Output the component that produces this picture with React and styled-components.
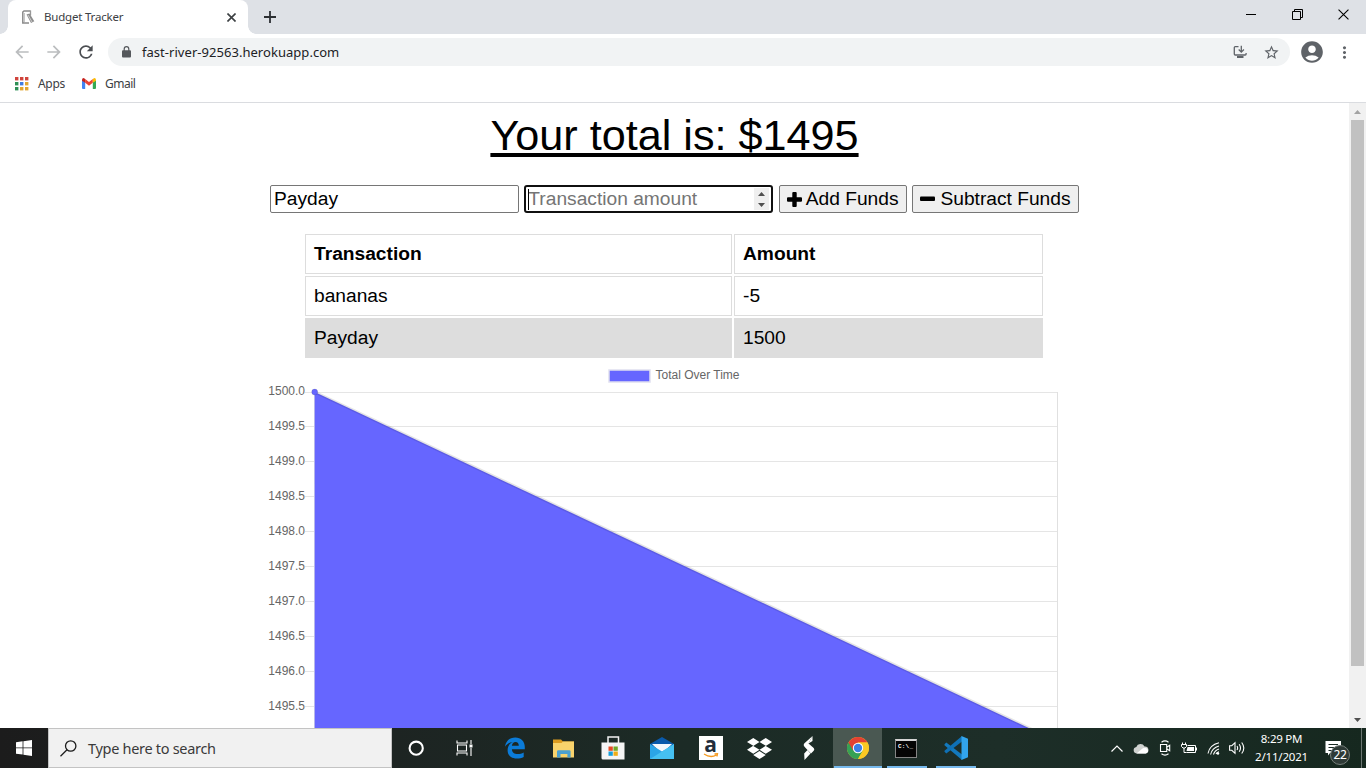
import React from 'react';
import styled, { createGlobalStyle } from 'styled-components';
import { FaDropbox } from 'react-icons/fa';
import {
  MdArrowBack, MdArrowForward, MdRefresh, MdStarBorder,
  MdAccountCircle, MdMoreVert,
} from 'react-icons/md';

const Global = createGlobalStyle`
  * { box-sizing: border-box; }
  body { margin: 0; background: #fff; overflow: hidden; }
`;

const ui = `"Noto Sans", "Open Sans", sans-serif`;
const arial = `"Liberation Sans", Arial, sans-serif`;

const Screen = styled.div`
  width: 1366px;
  height: 768px;
  display: flex;
  flex-direction: column;
  overflow: hidden;
  font-family: ${ui};
`;

const Label = styled.span`
  font-size: ${(p) => p.$size || 12}px;
  letter-spacing: ${(p) => p.$track || 0}px;
  color: ${(p) => p.$color || '#3c4043'};
  white-space: nowrap;
  line-height: 16px;
`;

/* Browser chrome */
const TabStrip = styled.div`
  height: 34px;
  flex: none;
  display: flex;
  background: #dee1e6;
  padding-left: 8px;
`;
const Tab = styled.div`
  position: relative;
  width: 240px;
  height: 34px;
  display: flex;
  align-items: center;
  padding: 0 12px 0 12px;
  background: #fff;
  border-radius: 8px 8px 0 0;
  &::before, &::after {
    content: '';
    position: absolute;
    bottom: 0;
    width: 8px;
    height: 8px;
  }
  &::before { left: -8px; background: radial-gradient(circle at 0 0, #dee1e6 7.5px, #fff 8px); }
  &::after { right: -8px; background: radial-gradient(circle at 100% 0, #dee1e6 7.5px, #fff 8px); }
`;
const TabTitle = styled.div`
  flex: 1;
  display: flex;
  margin-left: 8px;
`;
const NewTab = styled.div`
  width: 44px;
  display: flex;
  align-items: center;
  justify-content: center;
`;
const WindowButtons = styled.div`
  display: flex;
  margin-left: auto;
  height: 29px;
`;
const WindowButton = styled.div`
  width: 46px;
  display: flex;
  align-items: center;
  justify-content: center;
`;
const Toolbar = styled.div`
  height: 36px;
  flex: none;
  display: flex;
  align-items: center;
  padding-left: 12px;
  color: #5f6368;
`;
const NavButton = styled.div`
  width: 32px;
  height: 20px;
  display: flex;
  color: ${(p) => (p.$off ? '#bbbdbf' : '#4b4e52')};
`;
const Omnibox = styled.div`
  width: 1182px;
  height: 28px;
  border-radius: 14px;
  background: #f1f3f4;
  display: flex;
  align-items: center;
  padding: 0 10px 0 14px;
`;
const Url = styled.div`
  flex: 1;
  display: flex;
  margin-left: 11px;
`;
const OmniActions = styled.div`
  display: flex;
  align-items: center;
  gap: 16px;
`;
const Account = styled.div`
  display: flex;
  margin: 0 10px 0 9px;
`;
const Bookmarks = styled.div`
  height: 33px;
  flex: none;
  display: flex;
  align-items: center;
  padding: 0 0 5px 15px;
  border-bottom: 1px solid #dadce0;
`;
const Bookmark = styled.div`
  display: flex;
  align-items: center;
  gap: 9px;
  width: ${(p) => p.$w}px;
`;

/* Page */
const Viewport = styled.div`
  height: 625px;
  flex: none;
  display: flex;
`;
const Page = styled.main`
  width: 1349px;
  height: 625px;
  overflow: hidden;
  display: flex;
  flex-direction: column;
  align-items: center;
  font-family: ${arial};
  font-size: 19.2px;
  line-height: 22px;
  color: #000;
`;
const Total = styled.h1`
  margin: 8px 0 0;
  height: 74px;
  font-size: 43.2px;
  line-height: 48px;
  font-weight: 400;
  text-decoration: underline;
  text-decoration-thickness: 4px;
  text-underline-offset: 3px;
`;
const Form = styled.div`
  display: flex;
  gap: 5.33px;
  height: 28px;
  margin-bottom: 21px;
`;
const Field = styled.div`
  position: relative;
  width: 249px;
  height: 28px;
  display: flex;
  align-items: center;
  border: ${(p) => (p.$focus ? '2px solid #101010' : '1px solid #767676')};
  border-radius: ${(p) => (p.$focus ? 3 : 2)}px;
  padding: 0 2px 0 ${(p) => (p.$focus ? 2 : 3)}px;
`;
const Input = styled.input`
  flex: 1;
  min-width: 0;
  border: 0;
  padding: 0;
  outline: 0;
  background: transparent;
  font: 19.2px/22px ${arial};
  color: #000;
  &::placeholder { color: #757575; opacity: 1; }
`;
const Caret = styled.i`
  position: absolute;
  left: 2px;
  top: 2px;
  width: 1px;
  height: 21px;
  background: #000;
`;
const Spinner = styled.div`
  width: 15px;
  height: 22px;
  background: #efefef;
  display: flex;
  align-items: center;
  justify-content: center;
`;
const Button = styled.button`
  width: ${(p) => p.$w}px;
  height: 28px;
  padding: 0;
  display: flex;
  align-items: center;
  justify-content: center;
  gap: ${(p) => p.$gap}px;
  border: 1px solid #767676;
  border-radius: 2px;
  background: #efefef;
  font: 19.2px/22px ${arial};
  color: #000;
  white-space: nowrap;
`;
const Table = styled.div`
  display: grid;
  grid-template-columns: 427px 309px;
  gap: 2px;
  width: 738px;
  margin-left: -1px;
  flex: none;
`;
const Cell = styled.div`
  height: 40px;
  padding: 8px;
  border: 1px solid #ddd;
  background: ${(p) => (p.$shade ? '#ddd' : '#fff')};
  font-weight: ${(p) => (p.$head ? 700 : 400)};
`;
const ChartSvg = styled.svg`
  width: 821px;
  height: 370px;
  flex: none;
  display: block;
  font: 12px ${arial};
`;
const ScrollBar = styled.div`
  width: 17px;
  display: flex;
  flex-direction: column;
  justify-content: space-between;
  align-items: center;
  background: #f1f1f1;
`;
const ScrollArrow = styled.div`
  height: 17px;
  display: flex;
  align-items: center;
`;
const Thumb = styled.div`
  width: 13px;
  height: 546px;
  margin-bottom: auto;
  background: #c1c1c1;
`;

/* Taskbar */
const Taskbar = styled.div`
  height: 40px;
  flex: none;
  display: flex;
  background: linear-gradient(90deg, #1c1c1c 0, #1d2422 392px, #1c2b26 680px, #1d2e28 1000px, #16281f 1366px);
`;
const Start = styled.div`
  width: 48px;
  display: flex;
  align-items: center;
  justify-content: center;
`;
const Search = styled.div`
  width: 344px;
  display: flex;
  align-items: center;
  gap: 11px;
  padding-left: 11px;
  background: #f1f1f1;
  border: 1px solid #c3c3c3;
`;
const Task = styled.div`
  width: ${(p) => p.$w || 49}px;
  margin-left: ${(p) => p.$ml || 0}px;
  display: flex;
  align-items: center;
  justify-content: center;
  background: ${(p) => (p.$running
    ? `linear-gradient(#76b9ed, #76b9ed) center bottom / ${p.$active ? 48 : 40}px 2px no-repeat ${p.$active ? '#4a5852' : ''}`
    : 'transparent')};
`;
const Tray = styled.div`
  margin-left: auto;
  display: flex;
  align-items: center;
`;
const TrayItem = styled.div`
  width: ${(p) => p.$w || 24}px;
  display: flex;
  justify-content: center;
`;
const Clock = styled.div`
  width: 65px;
  display: flex;
  flex-direction: column;
  align-items: center;
  gap: 2px;
  padding-bottom: 1px;
`;
const Notify = styled.div`
  position: relative;
  width: 47px;
  height: 40px;
  padding: 12px 0 0 11px;
`;
const Count = styled.div`
  position: absolute;
  left: 16px;
  top: 17px;
  width: 20px;
  height: 20px;
  border-radius: 50%;
  border: 1px solid #77807c;
  background: #2e3a36;
  color: #fff;
  font-size: 12px;
  line-height: 18px;
  text-align: center;
  letter-spacing: -0.3px;
`;
const DesktopEdge = styled.div`
  width: 5px;
  height: 40px;
  border-left: 1px solid #6c7672;
`;

const ticks = [
  ['1500.0', 392], ['1499.5', 426], ['1499.0', 461], ['1498.5', 496], ['1498.0', 531],
  ['1497.5', 566], ['1497.0', 601], ['1496.5', 636], ['1496.0', 671], ['1495.5', 706],
];

function Chart() {
  return (
    <ChartSvg viewBox="264 358 821 370">
      <rect x="609" y="370" width="41" height="12" fill="#6666ff" />
      <rect x="609" y="370" width="41" height="12" fill="none" stroke="#e0e0f0" strokeWidth="1.5" />
      <text x="655.5" y="379" fill="#666">Total Over Time</text>
      {ticks.map(([name, y], i) => (
        <g key={name}>
          <rect x="305" y={y} width="753" height="1" fill="#e5e5e5" />
          <text x="305" y={395 + i * 35} textAnchor="end" fill="#666">{name}</text>
        </g>
      ))}
      <rect x="314" y="392" width="1" height="336" fill="#d8d8e2" />
      <rect x="1057" y="392" width="1" height="336" fill="#e0e0e0" />
      <path d="M314.7 392L1057.5 741.5H314.7Z" fill="#6666ff" />
      <path d="M314.7 392L1057.5 741.5" stroke="rgba(0,0,0,.1)" strokeWidth="3" />
      <circle cx="314.7" cy="392" r="3" fill="#6666ff" stroke="rgba(0,0,0,.1)" />
    </ChartSvg>
  );
}

const PlusIcon = () => (
  <svg width="15" height="15" viewBox="0 0 15 15">
    <path d="M6.300 0h2.400q1 0 1 1v4.300H14q1 0 1 1v2.400q0 1-1 1H9.700V14q0 1-1 1H6.300q-1 0-1-1V9.700H1q-1 0-1-1V6.300q0-1 1-1h4.300V1q0-1 1-1z" />
  </svg>
);
const MinusIcon = () => (
  <svg width="15" height="15" viewBox="0 0 15 15">
    <rect y="4.500" width="15" height="4.400" rx="1" />
  </svg>
);
const LockIcon = () => (
  <svg width="9" height="12" viewBox="0 0 9 12">
    <path d="M2.200 5V3a2.300 2.300 0 0 1 4.600 0v2" fill="none" stroke="#55585c" strokeWidth="1.200" />
    <rect x="0" y="4.300" width="9" height="7.200" rx="1" fill="#55585c" />
  </svg>
);
const Favicon = () => (
  <svg width="16" height="16" viewBox="0 0 16 16" fill="none">
    <path d="M10.500 2H4L2.800 3v11H9" stroke="#8a8a8a" strokeWidth="1.500" />
    <path d="M4.500 4v9" stroke="#c6c6c6" />
    <path d="M10.500 1.500v5" stroke="#999" strokeWidth="1.300" />
    <path d="M6.500 5.500l3-1 4.800 7.800-3.300 1.700z" fill="#8d8d8d" />
    <path d="M8 6l4 7" stroke="#ddd" strokeWidth=".8" />
  </svg>
);
const AppsIcon = () => (
  <svg width="14" height="14" viewBox="0 0 14 14">
    {['#d0443c', '#d0443c', '#d0443c', '#2f8f55', '#3f7be0', '#e2a52f', '#2f8f55', '#e2a52f', '#e2a52f'].map((c, i) => (
      <rect key={i} x={(i % 3) * 5} y={Math.floor(i / 3) * 5} width="3.400" height="3.400" fill={c} />
    ))}
  </svg>
);
const GmailIcon = () => (
  <svg width="14" height="11" viewBox="0 0 14 11">
    <path d="M0 2v8q0 1 1 1h2.200V4z" fill="#4285f4" />
    <path d="M14 2v8q0 1-1 1h-2.200V4z" fill="#34a853" />
    <path d="M3.200 1v3.800L7 7.700l3.800-2.900V1L7 3.900z" fill="#ea4335" />
    <path d="M0 2Q0 0 1.700 0L3.200 1v3.800L0 2.700z" fill="#c5221f" />
    <path d="M14 2Q14 0 12.300 0L10.800 1v3.800L14 2.700z" fill="#fbbc04" />
  </svg>
);
const InstallIcon = () => (
  <svg width="14" height="14" viewBox="0 0 14 14" fill="none" stroke="#5f6368" strokeWidth="1.300">
    <path d="M5.500 1.600H2.200Q1.300 1.600 1.300 2.500v6.600q0 .9.900.9h10q.9 0 .9-.9V8" />
    <path d="M8.300.8v5.800M5.700 4.500l2.600 2.600 2.600-2.600" />
    <path d="M4 12h6.500" strokeWidth="2" />
  </svg>
);
const Restore = () => (
  <svg width="11" height="11" viewBox="0 0 11 11" fill="none" stroke="#000">
    <path d="M.5 2.500h8v8h-8zM2.500 2.500v-2h8v8h-2" />
  </svg>
);
const Cross = ({ size, width, color }) => (
  <svg width={size} height={size} viewBox="0 0 10 10" stroke={color} strokeWidth={width}>
    <path d="M.5.5l9 9M9.500.5l-9 9" />
  </svg>
);
const StartIcon = () => (
  <svg width="16" height="16" viewBox="0 0 16 16" fill="#fff">
    <path d="M0 2.200L6.600 1.300V7.500H0zM7.400 1.200L16 0V7.500H7.400zM0 8.300h6.600v6.300L0 13.700zM7.400 8.300H16V16l-8.600-1.200z" />
  </svg>
);
const SearchIcon = () => (
  <svg width="17" height="17" viewBox="0 0 17 17" fill="none" stroke="#1c1c1c" strokeWidth="1.300">
    <circle cx="10.700" cy="6" r="5.200" />
    <path d="M7 9.700L.5 16.200" />
  </svg>
);
const CortanaIcon = () => (
  <svg width="17" height="17" viewBox="0 0 17 17">
    <circle cx="8.200" cy="8.200" r="6.600" fill="none" stroke="#fff" strokeWidth="2.100" />
  </svg>
);
const TaskViewIcon = () => (
  <svg width="17" height="16" viewBox="0 0 17 16" fill="none" stroke="#fff" strokeWidth="1.100">
    <path d="M1 .5v2.500h10V.5M1 15.500V13h10v2.500M1.500 5h9v6h-9zM15 0v4M15 8v8" />
    <rect x="13.500" y="4.500" width="3" height="3" fill="#fff" stroke="none" />
  </svg>
);
const EdgeIcon = () => (
  <svg width="20" height="22" viewBox="0 0 20 22">
    <path d="M0 9.700C.8 4 4.500.5 10.300.5c5.700 0 9.500 4 9.500 9.600v2.200H6.900c.2 3.400 2.600 4.800 5.700 4.800 2.400 0 4.300-.6 6.100-1.700v4.500c-2 1.100-4.400 1.600-6.900 1.600-5.800 0-9.200-3.200-9.200-8.300 0-4.100 2-6.900 5.400-8.100C4.800 5.300 2.200 6.600 0 9.700zM6.900 8.800h6.900c0-2.500-1.100-3.800-3.200-3.800-2.100 0-3.400 1.500-3.700 3.800z" fill="#0b7bd8" />
  </svg>
);
const FolderIcon = () => (
  <svg width="22" height="19" viewBox="0 0 22 19">
    <path d="M0 .5h8l2 2h11v4H0z" fill="#dc9b20" />
    <path d="M0 4h8.500l1.500-1.500H21V18.500H0z" fill="#f9d36c" />
    <path d="M4 18.500v-6q0-1.300 1.300-1.300h11q1.300 0 1.300 1.300v6h-3.200V15H7.500v3.500z" fill="#4ba0d0" />
  </svg>
);
const StoreIcon = () => (
  <svg width="24" height="24" viewBox="0 0 24 24">
    <path d="M7 7V1h10.500v6" fill="none" stroke="#f2f2f2" strokeWidth="1.500" />
    <path d="M.5 6.500h23v17H2q-1.500 0-1.500-1.500z" fill="#f5f5f5" />
    <path d="M7.500 10.500h4.300v4.300H7.500z" fill="#e74a25" />
    <path d="M12.500 10.500h4.300v4.300h-4.300z" fill="#72a928" />
    <path d="M7.500 15.500h4.300v4.300H7.500z" fill="#159fdc" />
    <path d="M12.500 15.500h4.300v4.300h-4.300z" fill="#efad16" />
  </svg>
);
const MailIcon = () => (
  <svg width="24" height="22" viewBox="0 0 24 22">
    <path d="M0 7L12 0l12 7v3H0z" fill="#0a5aab" />
    <path d="M2 7h20l-8 8h-4z" fill="#f3f8fc" />
    <path d="M0 7l12 7.500L24 7v15H0z" fill="#2ba5e7" />
    <path d="M0 22L24 7v15z" fill="#46c1f2" />
  </svg>
);
const AmazonTile = styled.div`
  width: 24px;
  height: 24px;
  background: #fff;
  display: flex;
  flex-direction: column;
  align-items: center;
  color: #222d3b;
  font: 700 21px/17px "Open Sans", sans-serif;
`;
const Smile = () => (
  <svg width="16" height="6" viewBox="0 0 16 6" fill="none" stroke="#f59a20" strokeWidth="1.300">
    <path d="M1 1q6.500 4.500 12.500 1M11.500 1l3-.3-.5 2.800" />
  </svg>
);
const BoltIcon = () => (
  <svg width="12" height="24" viewBox="0 0 12 24" fill="#fff">
    <path d="M9.500 0L1.200 7.500Q0 9 1.300 10.500L4.500 14 8 17.500l2.700-2.700q1.200-1.300 0-2.700L5.500 7.500z" />
    <path d="M9.500 0v5L5.500 7.500zM1.200 17.500l3.300-3.400 3 3.400L1.500 24z" />
  </svg>
);
const ChromeIcon = () => (
  <svg width="22" height="22" viewBox="0 0 22 22">
    <circle cx="11" cy="11" r="11" fill="#fbc924" />
    <path d="M11 11L1.470 5.500A11 11 0 0 0 11 22l4.800-8.200z" fill="#36a155" />
    <path d="M11 5.500h9.500A11 11 0 0 0 1.470 5.500L6.200 13.700z" fill="#e34133" />
    <path d="M11 5.500h9.500A11 11 0 0 1 11 22l4.800-8.200z" fill="#fbc924" />
    <circle cx="11" cy="11" r="5.200" fill="#fff" />
    <circle cx="11" cy="11" r="4.200" fill="#3e7fe6" />
  </svg>
);
const Console = styled.div`
  width: 22px;
  height: 19px;
  margin-right: 1px;
  background: #050505;
  border: 1px solid #858585;
  border-top: 2px solid #d5d5d5;
  color: #fff;
  font: 700 6px/8px "Liberation Mono", monospace;
  padding: 2px 0 0 2px;
  letter-spacing: 0.2px;
`;
const CodeIcon = () => (
  <svg width="24" height="24" viewBox="0 0 24 24">
    <path d="M.5 8.200L2.300 6.500 18 18.500V24L.5 9.300z" fill="#1379bd" />
    <path d="M.5 15.800l1.800 1.700L18 5.500V0L.5 14.700z" fill="#0f70b4" />
    <path d="M17.500 0L24 2.800v18.400L17.500 24z" fill="#32a4ec" />
  </svg>
);
const Chevron = () => (
  <svg width="12" height="7" viewBox="0 0 12 7" fill="none" stroke="#fff" strokeWidth="1.200"><path d="M.5 6.500L6 1l5.500 5.500" /></svg>
);
const CloudIcon = () => (
  <svg width="16" height="11" viewBox="0 0 16 11">
    <path d="M3.500 10.500A3.300 3.300 0 0 1 3.300 4 4.500 4.500 0 0 1 11.500 3.500a3.500 3.500 0 0 1 .8 7z" fill="#cfd2d0" />
    <path d="M3.500 10.500L9.500 5.500a4 4 0 0 1 5 .8 2.600 2.600 0 0 1-1.500 4.200z" fill="#fff" />
  </svg>
);
const MeetIcon = () => (
  <svg width="12" height="16" viewBox="0 0 12 16" fill="none" stroke="#fff" strokeWidth="1.100">
    <path d="M2.500 2.200Q6-.5 9.500 2.200M2.500 13.800q3.500 2.700 7 0M1.500 4.500h6.200v7H1.500zM8 7l2.700-1.700v5.400L8 9" />
  </svg>
);
const BatteryIcon = () => (
  <svg width="17" height="13" viewBox="0 0 17 13" fill="none" stroke="#fff">
    <path d="M6.500 3.500h8v7h-9M15.500 5.500v3M1.500.5v2M4.500.5v2M.5 2.500h5v2l-1.500 1.500h-2L.5 4.500zM3 6v4.500h2.500" />
    <path d="M6.500 5h6.500v4H5.500z" fill="#fff" stroke="none" />
  </svg>
);
const WifiIcon = () => (
  <svg width="13" height="13" viewBox="0 0 13 13" fill="none" stroke="#fff" strokeWidth="1.100">
    <path d="M1 11.500Q2.500 3 12 .8M6.500 12.500Q7.500 8.500 12 7M3.600 12.500Q5 6 12 4M9 12Q9.500 10.500 12 9.800" />
    <circle cx="11" cy="11.500" r="1.200" fill="#fff" stroke="none" />
  </svg>
);
const VolumeIcon = () => (
  <svg width="17" height="14" viewBox="0 0 17 14" fill="none" stroke="#fff" strokeWidth="1.100">
    <path d="M.6 4.700h2.200L6 1.700v10.600L2.800 9.300H.6zM8 5q1.300 2 0 4M10.200 3.300q2.600 3.700 0 7.400M12.700 1.500q4.200 5.500 0 11" />
  </svg>
);
const NoteIcon = () => (
  <svg width="17" height="16" viewBox="0 0 17 16">
    <path d="M.5 0h15.500v12H5L3 14.500V12H.5z" fill="#fff" />
    <path d="M3.500 3.500h9.500M3.500 6.500h9.500M3.500 9.500h5" stroke="#1b2c25" />
  </svg>
);

export default function App() {
  return (
    <Screen>
      <Global />
      <TabStrip>
        <Tab>
          <Favicon />
          <TabTitle><Label $size={11.5} $track={-0.2}>Budget Tracker</Label></TabTitle>
          <Cross size={9} width={1.8} color="#3c4043" />
        </Tab>
        <NewTab>
          <svg width="12" height="12" viewBox="0 0 12 12" stroke="#2c2f33" strokeWidth="1.800"><path d="M6 0v12M0 6h12" /></svg>
        </NewTab>
        <WindowButtons>
          <WindowButton><svg width="10" height="1"><rect width="10" height="1" /></svg></WindowButton>
          <WindowButton><Restore /></WindowButton>
          <WindowButton><Cross size={11} width={1} color="#000" /></WindowButton>
        </WindowButtons>
      </TabStrip>
      <Toolbar>
        <NavButton $off><MdArrowBack size={20} /></NavButton>
        <NavButton $off><MdArrowForward size={20} /></NavButton>
        <NavButton><MdRefresh size={20} /></NavButton>
        <Omnibox>
          <LockIcon />
          <Url><Label $size={13} $track={0.04} $color="#202124">fast-river-92563.herokuapp.com</Label></Url>
          <OmniActions><InstallIcon /><MdStarBorder size={17} /></OmniActions>
        </Omnibox>
        <Account><MdAccountCircle size={26} /></Account>
        <MdMoreVert size={19} />
      </Toolbar>
      <Bookmarks>
        <Bookmark $w={67}><AppsIcon /><Label $track={-0.3}>Apps</Label></Bookmark>
        <Bookmark><GmailIcon /><Label $track={-0.5}>Gmail</Label></Bookmark>
      </Bookmarks>

      <Viewport>
        <Page>
          <Total>Your total is: $1495</Total>
          <Form>
            <Field><Input defaultValue="Payday" /></Field>
            <Field $focus>
              <Input placeholder="Transaction amount" />
              <Caret />
              <Spinner>
                <svg width="7" height="15" viewBox="0 0 7 15" fill="#505050"><path d="M0 4L3.500 0 7 4zM0 11l3.500 4L7 11z" /></svg>
              </Spinner>
            </Field>
            <Button $w={128} $gap={4}><PlusIcon /><span>Add Funds</span></Button>
            <Button $w={167} $gap={5}><MinusIcon /><span>Subtract Funds</span></Button>
          </Form>
          <Table>
            <Cell $head>Transaction</Cell><Cell $head>Amount</Cell>
            <Cell>bananas</Cell><Cell>-5</Cell>
            <Cell $shade>Payday</Cell><Cell $shade>1500</Cell>
          </Table>
          <Chart />
        </Page>
        <ScrollBar>
          <ScrollArrow><svg width="7" height="4"><path d="M0 4L3.500 0 7 4z" fill="#a3a3a3" /></svg></ScrollArrow>
          <Thumb />
          <ScrollArrow><svg width="7" height="4"><path d="M0 0h7L3.500 4z" fill="#505050" /></svg></ScrollArrow>
        </ScrollBar>
      </Viewport>

      <Taskbar>
        <Start><StartIcon /></Start>
        <Search><SearchIcon /><Label $size={14.5} $track={-0.3} $color="#3a3a3a">Type here to search</Label></Search>
        <Task $w={48}><CortanaIcon /></Task>
        <Task $w={48}><TaskViewIcon /></Task>
        <Task $ml={2}><EdgeIcon /></Task>
        <Task><FolderIcon /></Task>
        <Task><StoreIcon /></Task>
        <Task><MailIcon /></Task>
        <Task><AmazonTile>a<Smile /></AmazonTile></Task>
        <Task><FaDropbox size={25} color="#fff" /></Task>
        <Task><BoltIcon /></Task>
        <Task $running $active><ChromeIcon /></Task>
        <Task $running><Console>C:\_</Console></Task>
        <Task $running><CodeIcon /></Task>
        <Tray>
          <TrayItem><Chevron /></TrayItem>
          <TrayItem><CloudIcon /></TrayItem>
          <TrayItem><MeetIcon /></TrayItem>
          <TrayItem><BatteryIcon /></TrayItem>
          <TrayItem><WifiIcon /></TrayItem>
          <TrayItem><VolumeIcon /></TrayItem>
          <Clock>
            <Label $size={11.5} $track={-0.25} $color="#fff">8:29 PM</Label>
            <Label $size={11.5} $track={-0.2} $color="#fff">2/11/2021</Label>
          </Clock>
          <Notify><NoteIcon /><Count>22</Count></Notify>
          <DesktopEdge />
        </Tray>
      </Taskbar>
    </Screen>
  );
}
